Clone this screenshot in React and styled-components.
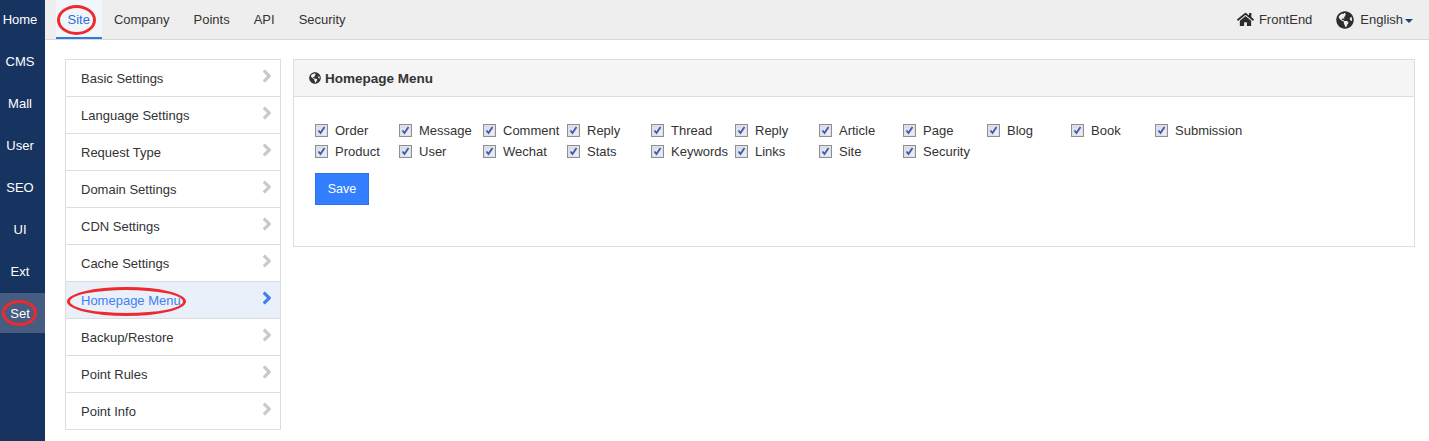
import React from 'react'
import styled, { createGlobalStyle } from 'styled-components'
import { FaHome, FaGlobeAmericas, FaAngleRight } from 'react-icons/fa'

const GlobalStyle = createGlobalStyle`
  html, body { margin: 0; padding: 0; background: #fff; }
  body { font-family: "Liberation Sans", Arial, sans-serif; font-size: 13px; color: #333; }
`

const Page = styled.div`
  display: flex;
  position: relative;
  width: 1429px;
  height: 441px;
  overflow: hidden;
`

const SideBar = styled.nav`
  width: 45px;
  flex: none;
  background: #17335f;
  display: flex;
  flex-direction: column;
  gap: 2px;
  margin-top: -1px;
`

const SideItem = styled.a`
  height: 40px;
  flex: none;
  box-sizing: border-box;
  padding-right: 5px;
  display: flex;
  align-items: center;
  justify-content: center;
  color: #fff;
  font-size: 13px;
  background: ${p => (p.$active ? '#465c80' : 'transparent')};
`

const Main = styled.div`
  flex: 1;
  display: flex;
  flex-direction: column;
  min-width: 0;
`

const TopBar = styled.header`
  height: 40px;
  box-sizing: border-box;
  flex: none;
  background: #eee;
  border-bottom: 1px solid #d8d8d8;
  display: flex;
  justify-content: space-between;
  padding: 0 16px 0 10.5px;
`

const TopGroup = styled.div`
  display: flex;
  align-items: stretch;
`

const TopTab = styled.a`
  display: flex;
  align-items: center;
  padding: 0 12px;
  height: 39px;
  box-sizing: border-box;
  color: ${p => (p.$active ? '#2f6fd6' : '#333')};
  background: ${p => (p.$active ? '#f1f6fc' : 'transparent')};
  border-bottom: 2px solid ${p => (p.$active ? '#2f7be0' : 'transparent')};
  border-top: 2px solid transparent;
`

const TopLink = styled.a`
  display: flex;
  align-items: center;
  gap: ${p => p.$gap}px;
  margin-left: 24px;
  color: #333;
  svg { color: #2d2d2d; }
`

const Caret = styled.span`
  width: 0;
  height: 0;
  border-left: 4px solid transparent;
  border-right: 4px solid transparent;
  border-top: 4px solid #1f3f73;
  margin-left: -4px;
  margin-top: 2px;
`

const Content = styled.main`
  display: flex;
  align-items: flex-start;
  gap: 12px;
  padding: 19px 14px 0 20px;
`

const MenuList = styled.ul`
  list-style: none;
  margin: 0;
  padding: 0;
  width: 216px;
  box-sizing: border-box;
  flex: none;
  border: 1px solid #ddd;
`

const MenuItem = styled.li`
  box-sizing: border-box;
  display: flex;
  align-items: center;
  justify-content: space-between;
  padding: 0 3px 0 15px;
  border-top: ${p => (p.$first ? 'none' : '1px solid #ddd')};
  height: ${p => (p.$first ? '36px' : '37px')};
  color: ${p => (p.$active ? '#3f7ff0' : '#333')};
  background: ${p => (p.$active ? '#e9f0f9' : '#fff')};
  svg { color: ${p => (p.$active ? '#3f7ff0' : '#c9c9c9')}; margin-top: -5px; }
`

const Panel = styled.section`
  flex: 1;
  height: 188px;
  box-sizing: border-box;
  border: 1px solid #ddd;
`

const PanelHead = styled.h3`
  margin: 0;
  height: 37px;
  box-sizing: border-box;
  background: #f5f5f5;
  border-bottom: 1px solid #ddd;
  display: flex;
  align-items: center;
  gap: 4px;
  padding: 0 15px;
  font-size: 13.5px;
  font-weight: bold;
  color: #333;
`

const PanelBody = styled.div`
  padding: 23px 21px;
`

const CheckGrid = styled.div`
  display: grid;
  grid-template-columns: repeat(11, 84px);
  grid-auto-rows: 21px;
`

const CheckRow = styled.label`
  display: flex;
  align-items: center;
  gap: 7px;
  white-space: nowrap;
`

const Box = styled.span`
  width: 13px;
  height: 13px;
  box-sizing: border-box;
  flex: none;
  border: 1px solid #8e8f8f;
  background: linear-gradient(135deg, #d6dae3, #eef0f6);
  box-shadow: inset 0 0 0 1px #dde1ea;
  display: flex;
  align-items: center;
  justify-content: center;
`

const SaveButton = styled.button`
  display: block;
  margin-top: 11px;
  width: 54px;
  height: 32px;
  background: #337fff;
  border: 1px solid #2e72e6;
  color: #fff;
  font: inherit;
  font-size: 12.5px;
  padding: 0;
`

const Mark = styled.span`
  position: absolute;
  box-sizing: border-box;
  border: 3px solid #ee2a2e;
  border-radius: 50%;
  left: ${p => p.$x}px;
  top: ${p => p.$y}px;
  width: ${p => p.$w}px;
  height: ${p => p.$h}px;
  pointer-events: none;
`

const SIDE = ['Home', 'CMS', 'Mall', 'User', 'SEO', 'UI', 'Ext', 'Set']
const TABS = ['Site', 'Company', 'Points', 'API', 'Security']
const MENU = [
  'Basic Settings',
  'Language Settings',
  'Request Type',
  'Domain Settings',
  'CDN Settings',
  'Cache Settings',
  'Homepage Menu',
  'Backup/Restore',
  'Point Rules',
  'Point Info',
]
const CHECKS = [
  'Order', 'Message', 'Comment', 'Reply', 'Thread', 'Reply', 'Article', 'Page', 'Blog', 'Book', 'Submission',
  'Product', 'User', 'Wechat', 'Stats', 'Keywords', 'Links', 'Site', 'Security',
]

function Check({ label }) {
  return (
    <CheckRow>
      <Box>
        <svg width="9" height="9" viewBox="0 0 9 9">
          <path d="M1.5 4.5 L3.5 7 L7.5 1" fill="none" stroke="#3f57a8" strokeWidth="1.8" />
        </svg>
      </Box>
      {label}
    </CheckRow>
  )
}

export default function App() {
  return (
    <Page>
      <GlobalStyle />
      <SideBar>
        {SIDE.map(s => (
          <SideItem key={s} $active={s === 'Set'}>{s}</SideItem>
        ))}
      </SideBar>
      <Main>
        <TopBar>
          <TopGroup>
            {TABS.map((t, i) => (
              <TopTab key={t} $active={i === 0}>{t}</TopTab>
            ))}
          </TopGroup>
          <TopGroup>
            <TopLink $gap={5}><FaHome size={17} />FrontEnd</TopLink>
            <TopLink $gap={6}><FaGlobeAmericas size={18} />English<Caret /></TopLink>
          </TopGroup>
        </TopBar>
        <Content>
          <MenuList>
            {MENU.map((m, i) => (
              <MenuItem key={m} $first={i === 0} $active={m === 'Homepage Menu'}>
                {m}
                <FaAngleRight size={20} />
              </MenuItem>
            ))}
          </MenuList>
          <Panel>
            <PanelHead><FaGlobeAmericas size={12} />Homepage Menu</PanelHead>
            <PanelBody>
              <CheckGrid>
                {CHECKS.map((c, i) => <Check key={i} label={c} />)}
              </CheckGrid>
              <SaveButton>Save</SaveButton>
            </PanelBody>
          </Panel>
        </Content>
      </Main>
      <Mark $x={57} $y={5} $w={39} $h={30} />
      <Mark $x={67} $y={287} $w={119} $h={29} />
      <Mark $x={2} $y={300} $w={35} $h={26} />
    </Page>
  )
}
